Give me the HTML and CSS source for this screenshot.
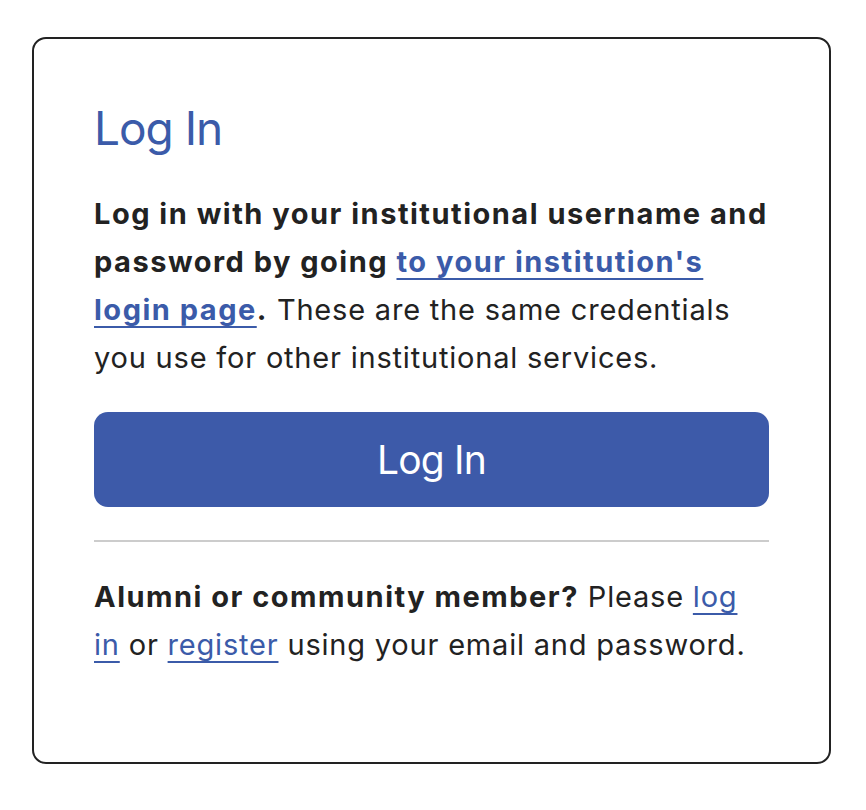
FILE: index.html
```html
<!DOCTYPE html>
<html lang="en">
<head>
    <meta charset="UTF-8">
    <meta name="viewport" content="width=device-width, initial-scale=1.0">
    <title>Log In</title>
    <link rel="stylesheet" href="styles.css">
</head>
<body>
    <div class="login-card">
        <h1 class="login-title">Log In</h1>
        <p class="login-text">
            <strong>Log in with your institutional username and password by going <a href="#">to your institution's login page</a>.</strong>
            These are the same credentials you use for other institutional services.
        </p>
        <button class="login-button">Log In</button>
        <hr class="divider">
        <p class="login-text">
            <strong>Alumni or community member?</strong> Please <a href="#">log in</a> or <a href="#">register</a> using your email and password.
        </p>
    </div>
</body>
</html>
```

FILE: styles.css
```css
body {
    font-family: Inter, "Noto Sans", sans-serif;
    margin: 0;
    background-color: white;
    color: #222;
}
.login-card {
    width: 675px;
    margin: 37px 0 0 32px;
    padding: 61px 60px 93px 60px;
    border: 2px solid #222;
    border-radius: 14px;
}
.login-title {
    margin: 0 0 34px 0;
    font-size: 46px;
    font-weight: 400;
    line-height: 56px;
    letter-spacing: -1px;
    color: #3b5ba9;
}
.login-text {
    margin: 0;
    font-size: 29px;
    line-height: 48px;
    letter-spacing: 0.8px;
}
.login-text strong {
    font-weight: 700;
    letter-spacing: 1.5px;
}
.login-text a {
    color: #3b5ba9;
    text-decoration: underline;
    text-decoration-thickness: 2px;
    text-underline-offset: 6px;
}
.login-button {
    display: block;
    width: 100%;
    height: 95px;
    margin-top: 30px;
    background-color: #3d5aa9;
    color: white;
    font-family: inherit;
    font-size: 39px;
    letter-spacing: -0.8px;
    border: none;
    border-radius: 14px;
    cursor: pointer;
}
.divider {
    margin: 33px 0 31px 0;
    border: none;
    border-top: 2px solid #ccc;
}
```
